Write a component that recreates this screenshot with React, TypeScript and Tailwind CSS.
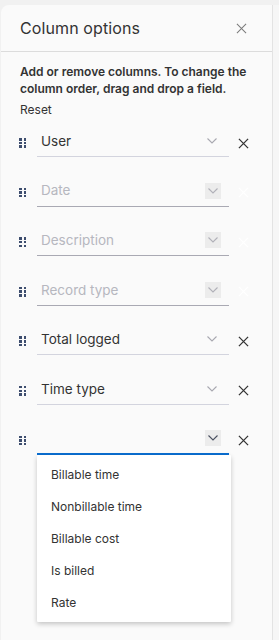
import React from "react";

const font = { fontFamily: "Inter, 'Noto Sans', sans-serif" };

function Handle() {
  return (
    <div className="w-[7px] h-[10px] grid grid-cols-2 gap-x-[2px] gap-y-[1px] mt-[3px]">
      {Array.from({ length: 6 }).map((_, i) => (
        <div key={i} className="w-[2.5px] h-[2.5px] bg-[#3d4d6e]" />
      ))}
    </div>
  );
}

function Chevron({ color }: { color: string }) {
  return (
    <svg width="10" height="6" viewBox="0 0 10 6" fill="none">
      <path d="M0.5 0.5 L5 5 L9.5 0.5" stroke={color} strokeWidth="1.1" />
    </svg>
  );
}

function XIcon({ color, size = 12, w = 1.4 }: { color: string; size?: number; w?: number }) {
  return (
    <svg width={size} height={size} viewBox="0 0 12 12" fill="none">
      <path d="M1 1 L11 11 M11 1 L1 11" stroke={color} strokeWidth={w} />
    </svg>
  );
}

type Row = { label: string; disabled?: boolean; active?: boolean };

const rows: Row[] = [
  { label: "User" },
  { label: "Date", disabled: true },
  { label: "Description", disabled: true },
  { label: "Record type", disabled: true },
  { label: "Total logged" },
  { label: "Time type" },
  { label: "", active: true },
];

const options = ["Billable time", "Nonbillable time", "Billable cost", "Is billed", "Rate"];

export default function App() {
  return (
    <div className="h-[640px] w-[279px] bg-[#f1f1f1] pt-[5px] pl-[1px] flex overflow-hidden" style={font}>
      <div className="w-[272px] h-full bg-[#fafafa] rounded-tl-[8px] border-r border-[#e3e3e3] flex flex-col">
        <div className="h-[47px] shrink-0 border-b border-[#dcdcdc] flex items-center justify-between pl-[19px] pr-[25px]">
          <span className="text-[16px] text-[#333] tracking-[0.1px] pb-[1px]">Column options</span>
          <XIcon color="#7a7a7a" size={11} w={1.1} />
        </div>
        <div className="pl-[19px] pr-[10px] pt-[11px]">
          <p className="text-[12px] leading-[17px] font-semibold text-[#333]">
            Add or remove columns. To change the column order, drag and drop a field.
          </p>
          <p className="text-[12px] leading-[17px] text-[#333] mt-[4px]">Reset</p>
        </div>
        <div className="mt-[8px] flex flex-col">
          {rows.map((r, i) => (
            <div key={i} className="h-[49.6px] shrink-0 relative flex items-start">
              <div className="w-[36px] h-[31px] flex items-center justify-center pl-[12px] pr-[5px] shrink-0">
                <Handle />
              </div>
              <div
                className={
                  "w-[192px] h-[31px] flex items-center justify-between pl-[4px] pr-[12px] " +
                  (r.active ? "border-b-[2px] border-[#0a6ed1]" : r.disabled ? "border-b border-[#a9a9b3]" : "border-b border-[#d3d4de]")
                }
              >
                <span className={"text-[13.5px] " + (r.disabled ? "text-[#b6b7bf]" : "text-[#333]")}>{r.label}</span>
                {r.disabled || r.active ? (
                  <div className="w-[16px] h-[16px] bg-[#ececec] flex items-center justify-center -mr-[4px]">
                    <Chevron color={r.active ? "#4a5060" : "#b0b0b8"} />
                  </div>
                ) : (
                  <Chevron color="#a8a8b0" />
                )}
              </div>
              <div className="w-[28px] h-[31px] flex items-center justify-center pt-[3px] pl-[1px]">
                <XIcon color={r.disabled ? "#ffffff" : "#333"} size={11} w={1.4} />
              </div>
              {r.active && (
                <div className="absolute left-[36px] top-[31px] w-[194px] bg-white shadow-[0_2px_5px_rgba(0,0,0,0.22)] pt-[4px] pb-[3px] z-10 rounded-[1px]">
                  {options.map((o) => (
                    <div key={o} className="h-[32px] flex items-center pl-[14px] text-[12px] text-[#333]">
                      {o}
                    </div>
                  ))}
                </div>
              )}
            </div>
          ))}
        </div>
      </div>
      <div className="flex-1 bg-[#f6f6f6]" />
    </div>
  );
}
